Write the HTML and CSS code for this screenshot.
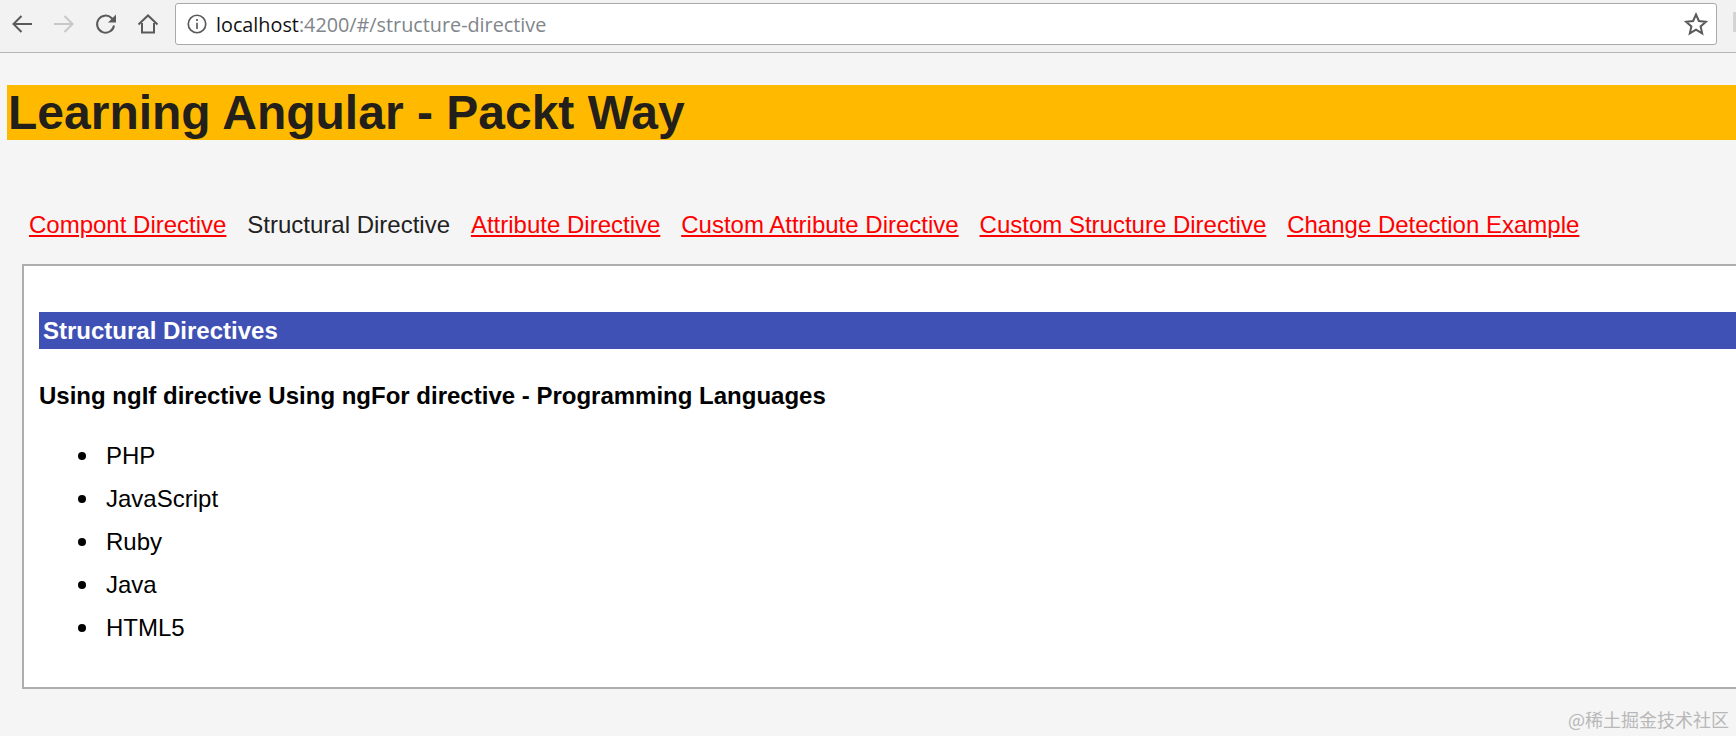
FILE: index.html
```html
<!DOCTYPE html>
<html lang="en">
<head>
<meta charset="utf-8">
<title>Learning Angular - Packt Way</title>
<link rel="stylesheet" href="styles.css">
</head>
<body>
<div class="toolbar">
  <div class="nav-icons">
    <svg class="icon" viewBox="0 0 24 24"><path d="M22 12H3.500M11.500 4l-8 8 8 8" class="stroke"/></svg>
    <svg class="icon dim" viewBox="0 0 24 24"><path d="M2 12h18.500M12.500 4l8 8-8 8" class="stroke"/></svg>
    <svg class="icon" viewBox="0 0 24 24"><path d="M20 13.500a8.500 8.500 0 1 1-2.500-7.500L20 8.500" class="stroke"/><path d="M22 2.500v8h-8z" class="fill"/></svg>
    <svg class="icon" viewBox="0 0 24 24"><path d="M2.500 12.500L12 3.500l9.500 9M6 11v9.500h12V11" class="stroke"/></svg>
  </div>
  <div class="omnibox">
    <svg class="info" viewBox="0 0 24 24"><circle cx="12" cy="12" r="10.500" class="stroke"/><path d="M12 10.500v7.500M12 6v2.500" class="stroke"/></svg>
    <span class="url"><span class="host">localhost</span>:4200/#/structure-directive</span>
    <svg class="star" viewBox="0 0 24 24"><path d="M12 2.500l2.900 6.500 7.100.7-5.400 4.700 1.600 7-6.200-3.700-6.200 3.700 1.600-7L2 9.700l7.100-.7z" class="stroke"/></svg>
  </div>
  <div class="ext"></div>
</div>
<main class="page">
  <h1 class="title">Learning Angular - Packt Way</h1>
  <nav class="links">
    <a href="#">Compont Directive</a>
    <span>Structural Directive</span>
    <a href="#">Attribute Directive</a>
    <a href="#">Custom Attribute Directive</a>
    <a href="#">Custom Structure Directive</a>
    <a href="#">Change Detection Example</a>
  </nav>
  <section class="panel">
    <h2 class="panel-title">Structural Directives</h2>
    <h3 class="subtitle">Using ngIf directive Using ngFor directive - Programming Languages</h3>
    <ul class="langs">
      <li>PHP</li>
      <li>JavaScript</li>
      <li>Ruby</li>
      <li>Java</li>
      <li>HTML5</li>
    </ul>
  </section>
</main>
<div class="watermark">@稀土掘金技术社区</div>
</body>
</html>
```
FILE: styles.css
```css
* { box-sizing: border-box; }
html, body { margin: 0; height: 736px; overflow: hidden; }
body {
  position: relative;
  width: 1736px;
  background: #f5f5f5;
  font-family: "Liberation Sans", Arial, sans-serif;
  color: #000;
}
.toolbar {
  height: 53px;
  background: #f2f2f2;
  border-bottom: 1px solid #b4b4b4;
  display: flex;
  align-items: flex-start;
  padding-top: 3px;
}
.nav-icons {
  flex: none;
  width: 175px;
  display: flex;
  gap: 18px;
  padding: 9px 0 0 9.500px;
}
.icon { width: 24px; height: 24px; flex: none; color: #5a5a5a; }
.icon.dim { color: #c8c8c8; }
.stroke { fill: none; stroke: currentColor; stroke-width: 2; }
.fill { fill: currentColor; }
.omnibox {
  flex: none;
  width: 1542px;
  height: 42px;
  background: #fff;
  border: 1px solid #a9a9a9;
  border-radius: 3px;
  display: flex;
  align-items: center;
  padding: 0 8px 0 11px;
  color: #5a5a5a;
}
.info { width: 20px; height: 20px; flex: none; }
.url {
  margin-left: 9px;
  flex: 1;
  font-family: "Open Sans", sans-serif;
  font-size: 19.800px;
  color: #80868b;
  white-space: nowrap;
}
.host { color: #111; }
.star { width: 24px; height: 24px; flex: none; }
.ext {
  flex: none;
  margin: 9px 0 0 16px;
  width: 3px;
  height: 20px;
  background: #d4d4d4;
}
.page { padding: 32px 0 0 7px; }
.title {
  margin: 0;
  height: 55px;
  line-height: 56px;
  background: #ffba00;
  color: #231f1a;
  font-size: 48px;
  font-weight: 700;
  padding-left: 1px;
  white-space: nowrap;
}
.links {
  margin: 70px 0 0 22px;
  display: flex;
  gap: 20.900px;
  font-size: 24px;
  line-height: 30px;
  color: #222;
  white-space: nowrap;
}
.links a { color: #f00; }
.panel {
  margin: 24px -40px 0 15px;
  height: 425px;
  background: #fff;
  border: 2px solid #adadad;
  padding: 46px 0 0 15px;
}
.panel-title {
  margin: 0;
  height: 37px;
  line-height: 37px;
  background: #3f51b5;
  color: #fff;
  font-size: 24px;
  font-weight: 700;
  padding-left: 4px;
}
.subtitle {
  margin: 32px 0 0;
  font-size: 24px;
  line-height: 30px;
  font-weight: 700;
}
.langs {
  list-style: none;
  margin: 23px 0 0;
  padding: 0 0 0 67px;
  font-size: 24px;
  line-height: 43px;
}
.langs li { position: relative; }
.langs li::before {
  content: "";
  position: absolute;
  left: -28px;
  top: 18px;
  width: 8px;
  height: 8px;
  border-radius: 50%;
  background: #000;
}
.watermark {
  position: absolute;
  right: 7px;
  bottom: 5px;
  font-family: "Noto Sans CJK SC", sans-serif;
  font-size: 18px;
  line-height: 24px;
  color: #b8b8b8;
}
```
